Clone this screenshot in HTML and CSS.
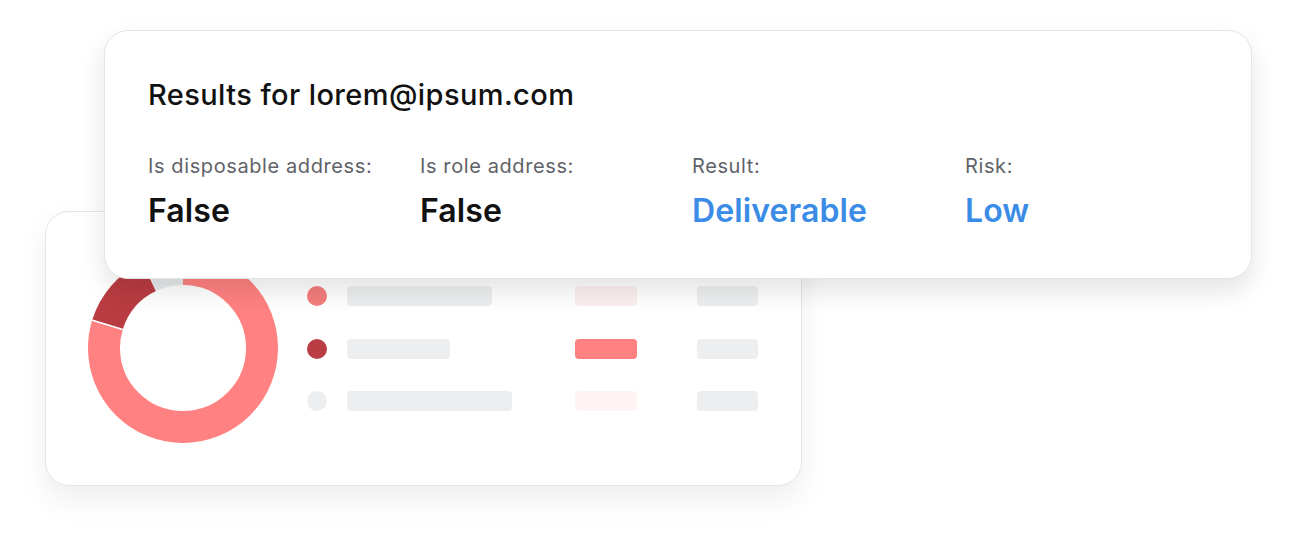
FILE: index.html
```html
<!DOCTYPE html>
<html lang="en">
<head>
<meta charset="utf-8">
<title>Results</title>
<link rel="stylesheet" href="styles.css">
</head>
<body>
<div class="canvas">
  <div class="card card-back">
    <svg class="donut" width="190" height="190" viewBox="0 0 190 190">
      <g transform="rotate(-90 95 95)">
        <circle class="seg seg-light" cx="95" cy="95" r="79" stroke-dasharray="395.7 496.37" stroke-dashoffset="0"/>
        <circle class="seg seg-dark" cx="95" cy="95" r="79" stroke-dasharray="64.8 496.37" stroke-dashoffset="-395.7"/>
        <circle class="seg seg-gray" cx="95" cy="95" r="79" stroke-dasharray="35.87 496.37" stroke-dashoffset="-460.5"/>
      </g>
      <line class="sep" x1="34.8" y1="76.6" x2="4.2" y2="67.2"/>
    </svg>
    <div class="legend">
      <span class="dot dot-light"></span><span class="bar bar-name w1"></span><span class="bar bar-mid faint1"></span><span class="bar bar-end"></span>
      <span class="dot dot-dark"></span><span class="bar bar-name w2"></span><span class="bar bar-mid strong"></span><span class="bar bar-end"></span>
      <span class="dot dot-gray"></span><span class="bar bar-name w3"></span><span class="bar bar-mid faint2"></span><span class="bar bar-end"></span>
    </div>
  </div>
  <div class="card card-front">
    <h1 class="title">Results for lorem@ipsum.com</h1>
    <div class="stats">
      <div class="stat">
        <div class="label">Is disposable address:</div>
        <div class="value">False</div>
      </div>
      <div class="stat">
        <div class="label">Is role address:</div>
        <div class="value">False</div>
      </div>
      <div class="stat">
        <div class="label">Result:</div>
        <div class="value blue">Deliverable</div>
      </div>
      <div class="stat">
        <div class="label">Risk:</div>
        <div class="value blue">Low</div>
      </div>
    </div>
  </div>
</div>
</body>
</html>
```
FILE: styles.css
```css
* { box-sizing: border-box; }
html, body { margin: 0; padding: 0; background: #ffffff; }
body { font-family: "Inter", "Roboto", "Liberation Sans", sans-serif; }

.canvas {
  position: relative;
  width: 1296px;
  height: 545px;
  overflow: hidden;
}

.card {
  position: absolute;
  background: #ffffff;
  border: 1px solid #e3e5e6;
  border-radius: 24px;
}

.card-back {
  left: 45px;
  top: 211px;
  width: 757px;
  height: 275px;
  display: flex;
  align-items: flex-start;
  padding: 41px 0 0 42px;
  box-shadow: 0 14px 30px rgba(0, 0, 0, 0.07);
}

.card-front {
  left: 104px;
  top: 30px;
  width: 1148px;
  height: 249px;
  padding: 46px 0 0 43px;
  box-shadow: 0 12px 26px rgba(0, 0, 0, 0.11);
}

.donut { display: block; flex: none; }
.seg { fill: none; stroke-width: 32; }
.seg-light { stroke: #ff8181; }
.seg-dark { stroke: #b93c42; }
.seg-gray { stroke: #e8ebec; }
.sep { stroke: #ffffff; stroke-width: 1.6; }

.legend {
  margin: 33px 0 0 29px;
  display: grid;
  grid-template-columns: 40px 228px 122px 61px;
  grid-auto-rows: 20px;
  row-gap: 32.5px;
  align-items: center;
}

.dot { width: 20px; height: 20px; border-radius: 50%; }
.dot-light { background: #f47c7c; }
.dot-dark { background: #bb3d44; }
.dot-gray { background: #eceeef; }

.bar { height: 20px; border-radius: 4px; background: #eceeef; }
.bar-name.w1 { width: 145px; }
.bar-name.w2 { width: 103px; }
.bar-name.w3 { width: 165px; }
.bar-mid { width: 62px; }
.bar-mid.faint1 { background: #fcefef; }
.bar-mid.strong { background: #ff8181; }
.bar-mid.faint2 { background: #fff4f4; }
.bar-end { width: 61px; }

.title {
  margin: 0;
  font-size: 29px;
  font-weight: 500;
  line-height: 36px;
  color: #111111;
  letter-spacing: 0.4px;
}

.stats {
  display: grid;
  grid-template-columns: 272px 272px 273px 200px;
  margin-top: 40px;
}

.label {
  font-size: 20px;
  line-height: 26px;
  color: #5f6368;
  font-weight: 400;
  letter-spacing: 0.6px;
}

.value {
  margin-top: 13px;
  font-size: 32px;
  line-height: 38px;
  font-weight: 600;
  color: #111111;
  letter-spacing: 0.1px;
}

.value.blue { color: #3a8ce6; }
```
